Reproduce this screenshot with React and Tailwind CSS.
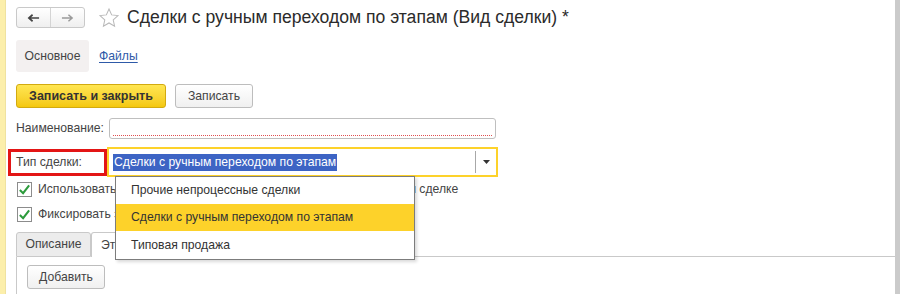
import React from 'react';

const Check = () => (
  <span className="flex h-[15px] w-[15px] items-center justify-center border border-[#8c8c8c] bg-white">
    <svg viewBox="0 0 14 14" className="h-[13px] w-[13px]">
      <path d="M2 7.5 L5.5 11 L12 2.5" fill="none" stroke="#2c9b3c" strokeWidth="2.2" />
    </svg>
  </span>
);

const App = () => {
  return (
    <div className="flex h-[294px] w-[900px] overflow-hidden bg-white font-['Liberation_Sans',Arial,sans-serif] text-[12.2px] text-[#3f3f3f]">
      <div className="w-[6px] shrink-0 border-r border-[#efe2a0] bg-[#fcefab]" />

      <div className="relative flex-1 pl-[10px]">
        {/* header */}
        <div className="mt-[7px] flex h-[21px] items-center">
          <div className="flex h-[21px] w-[69px] rounded-[3px] border border-[#c9c9c9] bg-gradient-to-b from-white to-[#efefef]">
            <div className="flex flex-1 items-center justify-center border-r border-[#d4d4d4]">
              <svg viewBox="0 0 14 10" className="h-[10px] w-[13px]">
                <path d="M13 5 H3 M6 1.5 L2 5 L6 8.5" fill="none" stroke="#444" strokeWidth="1.8" />
              </svg>
            </div>
            <div className="flex flex-1 items-center justify-center">
              <svg viewBox="0 0 14 10" className="h-[10px] w-[13px]">
                <path d="M1 5 H11 M8 1.5 L12 5 L8 8.5" fill="none" stroke="#9a9a9a" strokeWidth="1.6" />
              </svg>
            </div>
          </div>
          <svg viewBox="0 0 24 24" className="ml-[13px] h-[22px] w-[22px]">
            <path
              d="M12 2.2 L14.9 8.6 L21.8 9.3 L16.6 14 L18.1 20.9 L12 17.4 L5.9 20.9 L7.4 14 L2.2 9.3 L9.1 8.6 Z"
              fill="none"
              stroke="#b8b8b8"
              strokeWidth="1.1"
            />
          </svg>
          <span className="ml-[7px] text-[17.6px] leading-none text-[#2b2b2b]">
            Сделки с ручным переходом по этапам (Вид сделки) *
          </span>
        </div>

        {/* form tabs */}
        <div className="mt-[12px] flex h-[32px] items-center">
          <div className="flex h-[32px] w-[73px] items-center justify-center rounded-[3px] bg-[#f3f0f0] text-[#444]">
            Основное
          </div>
          <span className="ml-[10px] text-[#2e5aa8] underline underline-offset-2">Файлы</span>
        </div>

        {/* command bar */}
        <div className="mt-[12px] flex h-[24px] items-center gap-[9px]">
          <div className="flex h-[24px] w-[150px] items-center justify-center rounded-[3px] border border-[#d2aa10] bg-gradient-to-b from-[#ffe650] to-[#f4c80a] text-[12.5px] font-bold text-[#333]">
            Записать и закрыть
          </div>
          <div className="flex h-[24px] w-[78px] items-center justify-center rounded-[3px] border border-[#bdbdbd] bg-gradient-to-b from-white to-[#f0f0f0] text-[#444]">
            Записать
          </div>
        </div>

        {/* name */}
        <div className="mt-[10px] flex h-[21px] items-center">
          <span className="w-[93px] text-[#444]">Наименование:</span>
          <div className="flex h-[21px] w-[387px] items-end rounded-[3px] border border-[#bfbfbf] px-[3px] pb-[2px]">
            <div className="h-0 w-full border-b border-dotted border-[#e05050]" />
          </div>
        </div>

        {/* deal type */}
        <div className="mt-[8px] flex h-[30px] items-center">
          <div className="-ml-[8px] flex h-[27px] w-[99px] items-center border-[3px] border-[#e31515] pl-[5px] text-[#444]">
            Тип сделки:
          </div>
          <div className="flex h-[30px] w-[391px] items-center border-2 border-[#fdd22a] pl-[4px]">
            <span className="flex h-[17px] items-center bg-[#3d64c4] px-[1px] text-white">
              Сделки с ручным переходом по этапам
            </span>
            <div className="ml-auto flex h-[22px] w-[21px] items-center justify-center border-l border-[#a8a8a8]">
              <svg viewBox="0 0 7 4" className="h-[4px] w-[7px]">
                <path d="M0 0 H7 L3.5 4 Z" fill="#333" />
              </svg>
            </div>
          </div>
        </div>

        {/* checkboxes */}
        <div className="mt-[5px] flex h-[15px] items-center gap-[6px] pl-[1px]">
          <Check />
          <span className="whitespace-nowrap text-[#444]">Использовать ручной переход между этапами процесса по данной сделке</span>
        </div>
        <div className="mt-[10px] flex h-[15px] items-center gap-[6px] pl-[1px]">
          <Check />
          <span className="whitespace-nowrap text-[#444]">Фиксировать этапы</span>
        </div>

        {/* page tabs */}
        <div className="mt-[10px] flex h-[25px] items-end">
          <div className="flex h-[25px] w-[75px] items-center justify-center rounded-t-[3px] border border-[#c9c9c9] bg-[#ececec] text-[#444]">
            Описание
          </div>
          <div className="flex h-[25px] w-[70px] items-center rounded-t-[3px] border border-b-0 border-[#c9c9c9] bg-white pl-[9px] text-[#444]">
            Этапы
          </div>
          <div className="h-[1px] flex-1 bg-[#c9c9c9]" />
        </div>
        <div className="h-[40px] border-l border-[#c9c9c9] pl-[10px] pt-[8px]">
          <div className="flex h-[24px] w-[78px] items-center justify-center rounded-[3px] border border-[#bdbdbd] bg-gradient-to-b from-white to-[#f0f0f0] text-[#444]">
            Добавить
          </div>
        </div>

        {/* dropdown list */}
        <div className="absolute left-[109px] top-[176px] w-[300px] border border-[#7c7c7c] bg-white shadow-[2px_2px_3px_rgba(0,0,0,0.15)]">
          <div className="flex h-[27px] items-center pl-[15px] text-[#333]">Прочие непроцессные сделки</div>
          <div className="flex h-[27px] items-center bg-[#fdd22a] pl-[15px] text-[#333]">
            Сделки с ручным переходом по этапам
          </div>
          <div className="flex h-[28px] items-center pl-[15px] text-[#333]">Типовая продажа</div>
        </div>
      </div>

      <div className="w-[5px] shrink-0 bg-[#cbcbcb]" />
    </div>
  );
};

export default App;
